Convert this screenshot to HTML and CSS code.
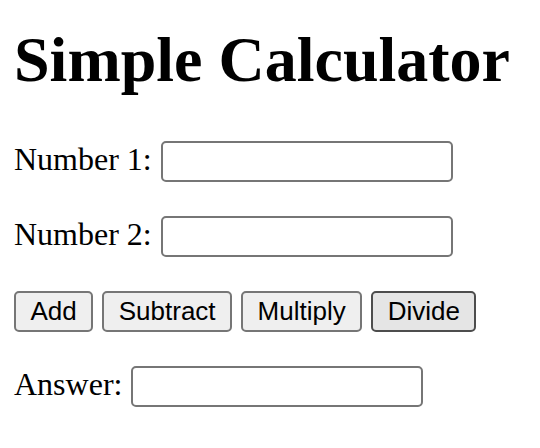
FILE: index.html
```html
<!DOCTYPE html>
<html lang="en">
<head>
<meta charset="utf-8">
<title>Simple Calculator</title>
<link rel="stylesheet" href="styles.css">
</head>
<body>
<div class="page">
  <h1 class="title">Simple Calculator</h1>
  <div class="rows">
    <div class="row">
      <label class="label" for="n1">Number 1:</label>
      <input class="field" id="n1" type="text">
    </div>
    <div class="row">
      <label class="label" for="n2">Number 2:</label>
      <input class="field" id="n2" type="text">
    </div>
    <div class="buttons">
      <button class="btn" type="button">Add</button>
      <button class="btn" type="button">Subtract</button>
      <button class="btn" type="button">Multiply</button>
      <button class="btn btn-active" type="button">Divide</button>
    </div>
    <div class="row">
      <label class="label" for="ans">Answer:</label>
      <input class="field" id="ans" type="text">
    </div>
  </div>
</div>
</body>
</html>
```

FILE: styles.css
```css
html, body {
  margin: 0;
  padding: 0;
  background: #ffffff;
}

.page {
  padding: 23px 14px 0 14px;
  font-family: "Liberation Serif", "Times New Roman", serif;
  color: #000000;
}

.title {
  margin: 0 0 44px 0;
  font-size: 64px;
  line-height: 74px;
  font-weight: bold;
}

.rows {
  display: flex;
  flex-direction: column;
  gap: 34px;
}

.row {
  display: flex;
  align-items: baseline;
  gap: 9px;
  height: 41px;
}

.label {
  font-size: 32px;
  line-height: 37px;
}

.field {
  box-sizing: border-box;
  width: 292px;
  height: 41px;
  margin: 0;
  padding: 0 6px;
  border: 2px solid #767676;
  border-radius: 5px;
  background: #ffffff;
  font-family: "Liberation Sans", Arial, sans-serif;
  font-size: 26px;
  outline: none;
}

.buttons {
  display: flex;
  gap: 9px;
  height: 41px;
}

.btn {
  box-sizing: border-box;
  height: 41px;
  margin: 0;
  padding: 0 14.5px;
  border: 2px solid #767676;
  border-radius: 5px;
  background: #efefef;
  color: #000000;
  font-family: "Liberation Sans", Arial, sans-serif;
  font-size: 26px;
  line-height: 37px;
}

.btn-active {
  background: #e5e5e5;
  border-color: #4d4d4d;
}
```
